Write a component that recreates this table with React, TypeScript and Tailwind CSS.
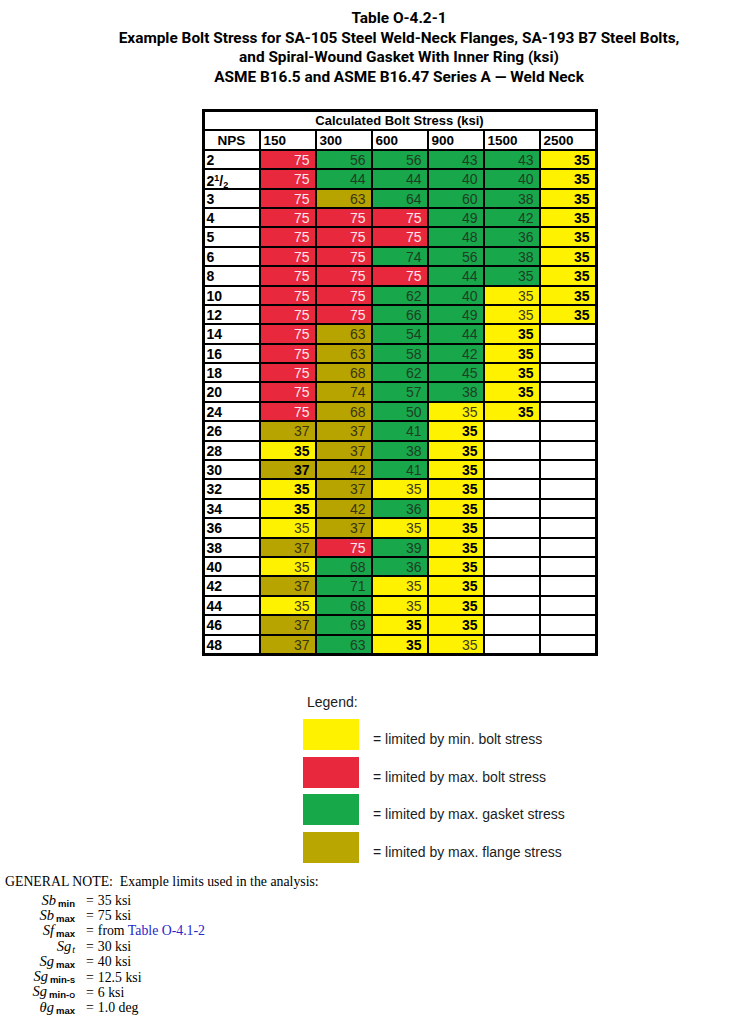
const rows: [string, string[]][] = [
  ["2", ["R75", "G56", "G56", "G43", "G43", "Y35b"]],
  ["2½", ["R75", "G44", "G44", "G40", "G40", "Y35b"]],
  ["3", ["R75", "O63", "G64", "G60", "G38", "Y35b"]],
  ["4", ["R75", "R75", "R75", "G49", "G42", "Y35b"]],
  ["5", ["R75", "R75", "R75", "G48", "G36", "Y35b"]],
  ["6", ["R75", "R75", "G74", "G56", "G38", "Y35b"]],
  ["8", ["R75", "R75", "R75", "G44", "G35", "Y35b"]],
  ["10", ["R75", "R75", "G62", "G40", "Y35", "Y35b"]],
  ["12", ["R75", "R75", "G66", "G49", "Y35", "Y35b"]],
  ["14", ["R75", "O63", "G54", "G44", "Y35b", "W"]],
  ["16", ["R75", "O63", "G58", "G42", "Y35b", "W"]],
  ["18", ["R75", "O68", "G62", "G45", "Y35b", "W"]],
  ["20", ["R75", "O74", "G57", "G38", "Y35b", "W"]],
  ["24", ["R75", "O68", "G50", "Y35", "Y35b", "W"]],
  ["26", ["O37", "O37", "G41", "Y35b", "W", "W"]],
  ["28", ["Y35b", "O37", "G38", "Y35b", "W", "W"]],
  ["30", ["O37b", "O42", "G41", "Y35b", "W", "W"]],
  ["32", ["Y35b", "O37", "Y35", "Y35b", "W", "W"]],
  ["34", ["Y35b", "O42", "G36", "Y35b", "W", "W"]],
  ["36", ["Y35", "O37", "Y35", "Y35b", "W", "W"]],
  ["38", ["O37", "R75", "G39", "Y35b", "W", "W"]],
  ["40", ["Y35", "G68", "G36", "Y35b", "W", "W"]],
  ["42", ["O37", "G71", "Y35", "Y35b", "W", "W"]],
  ["44", ["Y35", "G68", "Y35", "Y35b", "W", "W"]],
  ["46", ["O37", "G69", "Y35b", "Y35b", "W", "W"]],
  ["48", ["O37", "G63", "Y35b", "Y35", "W", "W"]],
];

const fill: Record<string, string> = {
  R: "bg-[#e8283c] text-[#fde6e8]",
  G: "bg-[#18a74b] text-[#1d3f24]",
  Y: "bg-[#fff200] text-[#3f3b1c]",
  O: "bg-[#b8a400] text-[#3a3512]",
  W: "bg-white",
};

const Cell = ({ code }: { code: string }) => {
  const bold = code.endsWith("b");
  const value = code.slice(1).replace("b", "");
  return (
    <div className={`pr-[5px] pt-[1px] text-right ${fill[code[0]]} ${bold ? "font-bold text-black" : ""}`}>
      {value}
    </div>
  );
};

const Nps = ({ label }: { label: string }) =>
  label === "2½" ? (
    <div className="bg-white pl-[2px] font-bold text-black">
      2<span className="text-[9px] align-[5px]">1</span>/<span className="text-[9px] align-[-2px]">2</span>
    </div>
  ) : (
    <div className="bg-white pl-[2px] pt-[1px] font-bold text-black">{label}</div>
  );

const legend = [
  ["bg-[#fff200]", "= limited by min. bolt stress"],
  ["bg-[#e8283c]", "= limited by max. bolt stress"],
  ["bg-[#17a84a]", "= limited by max. gasket stress"],
  ["bg-[#b9a600]", "= limited by max. flange stress"],
];

const Sub = ({ children }: { children: React.ReactNode }) => (
  <span className="ml-[2px] font-['Liberation_Sans',sans-serif] text-[9.5px] leading-[10px] font-bold not-italic align-[-2px]">
    {children}
  </span>
);

const limits: [React.ReactNode, React.ReactNode][] = [
  [<><i>Sb</i><Sub>min</Sub></>, "35 ksi"],
  [<><i>Sb</i><Sub>max</Sub></>, "75 ksi"],
  [<><i>Sf</i><Sub>max</Sub></>, <>from <span className="text-[#2727c9]">Table O-4.1-2</span></>],
  [<><i>Sg</i><span className="ml-[1px] text-[10px] leading-[10px] italic align-[-2px]">t</span></>, "30 ksi"],
  [<><i>Sg</i><Sub>max</Sub></>, "40 ksi"],
  [<><i>Sg</i><Sub>min-<span className="text-[7.5px]">S</span></Sub></>, "12.5 ksi"],
  [<><i>Sg</i><Sub>min-<span className="text-[7.5px]">O</span></Sub></>, "6 ksi"],
  [<><i>θg</i><Sub>max</Sub></>, "1.0 deg"],
];

export default function App() {
  return (
    <div className="w-[743px] h-[1024px] overflow-hidden bg-white text-black">
      <header className="flex flex-col items-center pl-[55px] pt-[9px] text-center font-['Roboto',sans-serif] text-[15.4px] font-bold leading-[19.5px]">
        <div>Table O-4.2-1</div>
        <div className="whitespace-nowrap">Example Bolt Stress for SA-105 Steel Weld-Neck Flanges, SA-193 B7 Steel Bolts,</div>
        <div>and Spiral-Wound Gasket With Inner Ring (ksi)</div>
        <div>ASME B16.5 and ASME B16.47 Series A — Weld Neck</div>
      </header>

      <div className="mt-[22px] flex justify-center pl-[56px]">
        <div className="grid grid-cols-[repeat(7,54px)] auto-rows-[17.4px] gap-[2px] border-[3px] border-black bg-black font-['Liberation_Sans',Arial,sans-serif] text-[14px] leading-[17px]">
          <div className="col-span-7 bg-white text-center text-[13px] font-bold">Calculated Bolt Stress (ksi)</div>
          <div className="bg-white pt-[1px] text-center text-[13.5px] font-bold">NPS</div>
          {["150", "300", "600", "900", "1500", "2500"].map((c) => (
            <div key={c} className="bg-white pl-[3px] pt-[1px] text-[13.5px] font-bold">
              {c}
            </div>
          ))}
          {rows.map(([nps, cells]) => (
            <div key={nps} className="contents">
              <Nps label={nps} />
              {cells.map((c, i) => (
                <Cell key={i} code={c} />
              ))}
            </div>
          ))}
        </div>
      </div>

      <section className="ml-[303px] mt-[38px] font-['Liberation_Sans',Arial,sans-serif] text-[14px] text-[#1c1c1c]">
        <div className="ml-[4px] leading-[17px]">Legend:</div>
        <div className="mt-[8.5px] flex flex-col gap-[6.5px]">
          {legend.map(([bg, text]) => (
            <div key={text} className="flex h-[31px] items-center">
              <div className={`h-[31px] w-[56px] ${bg}`} />
              <span className="ml-[14px] mt-[10px]">{text}</span>
            </div>
          ))}
        </div>
      </section>

      <section className="ml-[5px] mt-[11px] font-['Liberation_Serif',serif] text-[13.8px] leading-[16px]">
        <div className="whitespace-pre">GENERAL NOTE:  Example limits used in the analysis:</div>
        <div className="mt-[3px]">
          {limits.map(([label, value], i) => (
            <div key={i} className="flex h-[15.4px] items-center whitespace-nowrap leading-[14px]">
              <span className="w-[70px] text-right text-[14.5px]">{label}</span>
              <span className="ml-[11px]">=</span>
              <span className="ml-[4px]">{value}</span>
            </div>
          ))}
        </div>
      </section>
    </div>
  );
}
